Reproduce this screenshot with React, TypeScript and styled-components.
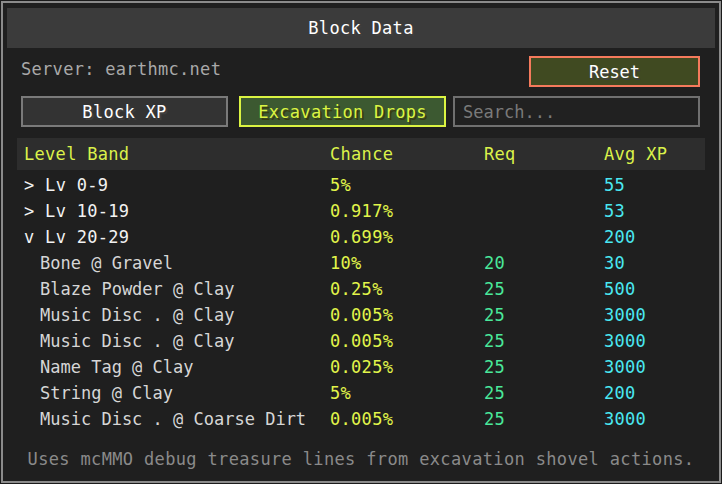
import styled, { createGlobalStyle } from 'styled-components';

type Band = {
  label: string;
  open: boolean;
  chance: string;
  xp: string;
  drops?: { name: string; chance: string; req: string; xp: string }[];
};

const bands: Band[] = [
  { label: 'Lv 0-9', open: false, chance: '5%', xp: '55' },
  { label: 'Lv 10-19', open: false, chance: '0.917%', xp: '53' },
  {
    label: 'Lv 20-29',
    open: true,
    chance: '0.699%',
    xp: '200',
    drops: [
      { name: 'Bone @ Gravel', chance: '10%', req: '20', xp: '30' },
      { name: 'Blaze Powder @ Clay', chance: '0.25%', req: '25', xp: '500' },
      { name: 'Music Disc . @ Clay', chance: '0.005%', req: '25', xp: '3000' },
      { name: 'Music Disc . @ Clay', chance: '0.005%', req: '25', xp: '3000' },
      { name: 'Name Tag @ Clay', chance: '0.025%', req: '25', xp: '3000' },
      { name: 'String @ Clay', chance: '5%', req: '25', xp: '200' },
      { name: 'Music Disc . @ Coarse Dirt', chance: '0.005%', req: '25', xp: '3000' },
    ],
  },
];

export default function App() {
  return (
    <>
      <GlobalStyle />
      <Screen>
        <Panel>
          <TitleBar>Block Data</TitleBar>

          <Controls>
            <TopRow>
              <ServerLabel>Server: earthmc.net</ServerLabel>
              <ResetButton>Reset</ResetButton>
            </TopRow>
            <TabRow>
              <TabButton>Block XP</TabButton>
              <TabButton $active>Excavation Drops</TabButton>
              <SearchBox placeholder="Search..." />
            </TabRow>
          </Controls>

          <Table>
            <HeaderRow>
              <HeadCell>Level Band</HeadCell>
              <HeadCell>Chance</HeadCell>
              <HeadCell>Req</HeadCell>
              <HeadCell>Avg XP</HeadCell>
            </HeaderRow>
            {bands.map((b) => (
              <Group key={b.label}>
                <Row>
                  <BandCell>
                    {b.open ? 'v' : '>'} {b.label}
                  </BandCell>
                  <ChanceCell>{b.chance}</ChanceCell>
                  <ReqCell />
                  <XpCell>{b.xp}</XpCell>
                </Row>
                {b.open &&
                  b.drops?.map((d, i) => (
                    <Row key={i}>
                      <DropCell>{d.name}</DropCell>
                      <ChanceCell>{d.chance}</ChanceCell>
                      <ReqCell>{d.req}</ReqCell>
                      <XpCell>{d.xp}</XpCell>
                    </Row>
                  ))}
              </Group>
            ))}
          </Table>

          <Footer>Uses mcMMO debug treasure lines from excavation shovel actions.</Footer>
        </Panel>
      </Screen>
    </>
  );
}

const GlobalStyle = createGlobalStyle`
  html, body {
    margin: 0;
    background: #1b1b1b;
  }
  body {
    font-family: "DejaVu Sans Mono", "Liberation Mono", monospace;
    font-size: 17px;
  }
`;

const Screen = styled.div`
  width: 722px;
  height: 484px;
  padding: 1px;
  box-sizing: border-box;
`;

const Panel = styled.div`
  height: 100%;
  box-sizing: border-box;
  border: 2px solid #8b8b8b;
  background: #1f1f1f;
  padding: 5px 4px 0 4px;
  display: flex;
  flex-direction: column;
`;

const TitleBar = styled.div`
  height: 40px;
  background: #3b3b3b;
  color: #fff;
  display: flex;
  align-items: center;
  justify-content: center;
  text-shadow: 2px 2px 0 #3f3f3f;
  letter-spacing: 0.3px;
`;

const Controls = styled.div`
  padding: 8px 15px 0 14px;
  display: flex;
  flex-direction: column;
  gap: 9px;
`;

const TopRow = styled.div`
  display: flex;
  align-items: center;
  justify-content: space-between;
`;

const ServerLabel = styled.div`
  color: #a9a9a9;
  letter-spacing: 0.3px;
  margin-top: -6px;
`;

const ResetButton = styled.div`
  width: 171px;
  height: 31px;
  box-sizing: border-box;
  border: 2px solid #f57a5c;
  background: #404a21;
  color: #fff;
  display: flex;
  align-items: center;
  justify-content: center;
  text-shadow: 2px 2px 0 #3f3f3f;
`;

const TabRow = styled.div`
  display: flex;
  & > :nth-child(2) {
    margin-left: 11px;
  }
  & > :nth-child(3) {
    margin-left: 7px;
  }
`;

const TabButton = styled.div<{ $active?: boolean }>`
  flex: 0 0 207px;
  height: 31px;
  box-sizing: border-box;
  border: 2px solid ${(p) => (p.$active ? '#dbf442' : '#7a7a7a')};
  background: ${(p) => (p.$active ? '#3c5931' : '#333333')};
  color: ${(p) => (p.$active ? '#dbf442' : '#ffffff')};
  text-shadow: 2px 2px 0 ${(p) => (p.$active ? '#373d11' : '#3f3f3f')};
  display: flex;
  align-items: center;
  justify-content: center;
  letter-spacing: 0.3px;
`;

const SearchBox = styled.input`
  flex: 1;
  min-width: 0;
  height: 31px;
  box-sizing: border-box;
  border: 2px solid #707070;
  background: #212121;
  color: #ddd;
  font: inherit;
  padding: 0 8px;
  outline: none;
  &::placeholder {
    color: #7a7a7a;
  }
`;

const Table = styled.div`
  margin: 11px 10px 0 10px;
  display: flex;
  flex-direction: column;
`;

const Grid = styled.div`
  display: grid;
  grid-template-columns: 306px 154px 120px 1fr;
  padding-left: 7px;
  align-items: center;
  letter-spacing: 0.3px;
`;

const HeaderRow = styled(Grid)`
  height: 32px;
  background: #2d2d2d;
  margin-bottom: 2px;
`;

const HeadCell = styled.div`
  color: #dbf24a;
`;

const Group = styled.div`
  display: flex;
  flex-direction: column;
`;

const Row = styled(Grid)`
  height: 26px;
`;

const BandCell = styled.div`
  color: #f2f2f2;
  white-space: pre;
`;

const DropCell = styled.div`
  color: #d6d6d6;
  padding-left: 16px;
  white-space: nowrap;
  letter-spacing: 0;
`;

const ChanceCell = styled.div`
  color: #e2f54a;
`;

const ReqCell = styled.div`
  color: #4ae89a;
`;

const XpCell = styled.div`
  color: #4ae8f2;
`;

const Footer = styled.div`
  margin-top: auto;
  height: 48px;
  display: flex;
  align-items: center;
  justify-content: center;
  color: #8a8a8a;
  letter-spacing: 0.35px;
  padding-top: 4px;
  box-sizing: border-box;
`;
